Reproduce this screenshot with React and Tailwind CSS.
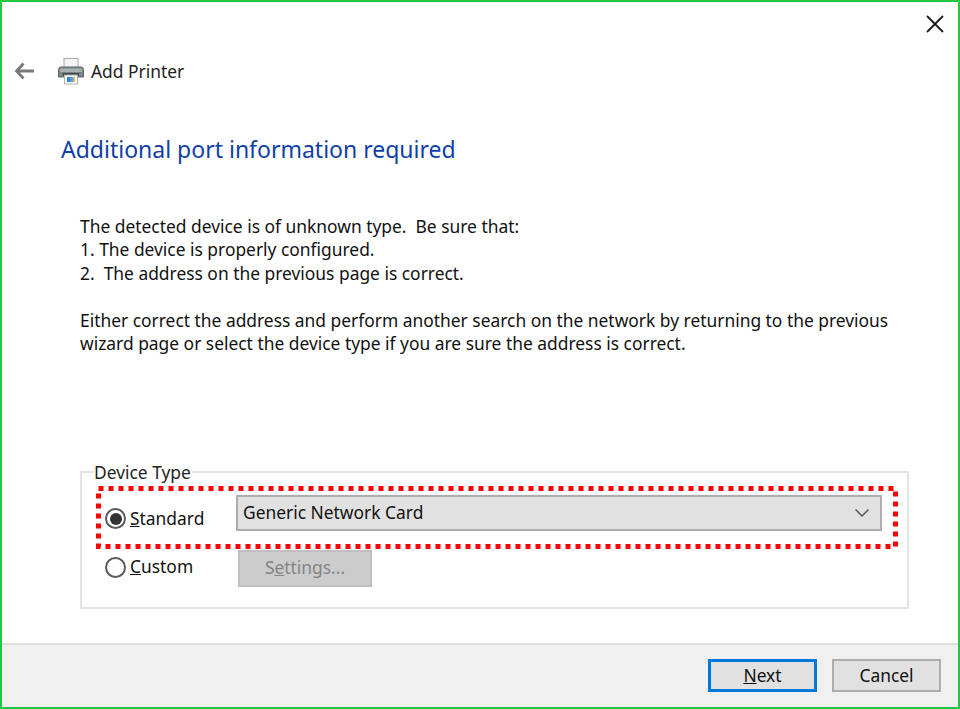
const Radio = ({ checked }) => (
  <span className="flex h-[21px] w-[21px] shrink-0 items-center justify-center rounded-full border-2 border-[#5a5a5a] bg-white">
    {checked && <span className="h-3 w-3 rounded-full bg-[#333333]" />}
  </span>
);

const PrinterIcon = () => (
  <svg width="28" height="28" viewBox="0 0 28 28" className="shrink-0">
    <rect x="7" y="1.500" width="14" height="9" fill="#f4f4f4" stroke="#a8a8a8" />
    <path d="M4 10h20a2.500 2.500 0 0 1 2.500 2.500V20H1.500v-7.500A2.500 2.500 0 0 1 4 10z" fill="#7d8488" stroke="#5f6568" />
    <rect x="3" y="11.500" width="22" height="3.500" fill="#a9afb3" />
    <rect x="6" y="16" width="16" height="3" fill="#3f4447" />
    <rect x="22.500" y="12.500" width="1.500" height="1.500" fill="#5bd04a" />
    <rect x="7.500" y="18" width="13" height="9" fill="#fafafa" stroke="#b0b0b0" />
    <rect x="10" y="20" width="3" height="5" fill="#2f86d6" />
    <rect x="13" y="20" width="3" height="5" fill="#49a5e8" />
    <rect x="16" y="20" width="2" height="5" fill="#e8b64a" />
  </svg>
);

const App = () => {
  return (
    <div
      className="box-border flex h-[709px] w-[960px] flex-col overflow-hidden border-2 border-[#22c940] bg-white text-[17.4px] leading-[23.500px] text-[#111111]"
      style={{ fontFamily: '"Noto Sans", sans-serif' }}
    >
      <div className="flex h-[43px] shrink-0 justify-end pr-[14px] pt-[13px]">
        <svg width="18" height="18" viewBox="0 0 18 18" fill="none" stroke="#1a1a1a" strokeWidth="1.800">
          <path d="M1 1l16 16M17 1L1 17" />
        </svg>
      </div>

      <div className="flex h-[52px] shrink-0 items-center pl-3">
        <svg width="20" height="18" viewBox="0 0 20 18" fill="none" stroke="#7a7a7a" strokeWidth="2.800">
          <path d="M20 9H2.500M9.500 1.500L2.500 9l7 7.500" />
        </svg>
        <div className="ml-[23px]"><PrinterIcon /></div>
        <span className="ml-[6px] pt-[2px] text-[#222222]">Add Printer</span>
      </div>

      <h1 className="ml-[59px] mt-[35px] text-[23px] leading-[34px] text-[#0f3fa8]">Additional port information required</h1>

      <div className="ml-[78px] mt-[48.500px] w-[830px]">
        <p>The detected device is of unknown type.&nbsp; Be sure that:</p>
        <p>1. The device is properly configured.</p>
        <p>2.&nbsp; The address on the previous page is correct.</p>
        <p className="mt-[23.500px]">
          Either correct the address and perform another search on the network by returning to the previous<br />
          wizard page or select the device type if you are sure the address is correct.
        </p>
      </div>

      <fieldset className="ml-[78px] mt-[106.500px] h-[147px] w-[829px] border-2 border-[#e3e3e3] pl-[14px]">
        <legend className="ml-[-2px] px-0 pr-[1px] leading-[20px] text-[#222222]">Device Type</legend>

        <div className="relative mt-[4px] h-[63px] w-[802px]">
          <svg width="802" height="63" className="absolute inset-0" fill="none">
            <rect x="2.500" y="2.500" width="797" height="58" stroke="#ff0000" strokeWidth="5" strokeDasharray="5 5" />
          </svg>
          <div className="flex h-full items-start pl-[9px] pt-[22px]">
            <Radio checked />
            <span className="ml-[4px] mt-[-1px] w-[106px]"><u>S</u>tandard</span>
            <div className="mt-[-13px] flex h-9 w-[646px] items-center justify-between border-2 border-[#adadad] bg-[#e1e1e1] pl-[5px] pr-[11px]">
              <span>Generic Network Card</span>
              <svg width="14" height="8" viewBox="0 0 14 8" fill="none" stroke="#555555" strokeWidth="1.500">
                <path d="M0.500 0.500L7 7l6.500-6.500" />
              </svg>
            </div>
          </div>
        </div>

        <div className="ml-[9px] mt-[-1px] flex h-[38px] items-center">
          <Radio />
          <span className="ml-[4px] w-[108px]"><u>C</u>ustom</span>
          <button className="mt-[2px] h-[37px] w-[134px] border-2 border-[#bfbfbf] bg-[#cccccc] text-[#838383]">
            S<u>e</u>ttings...
          </button>
        </div>
      </fieldset>

      <div className="mt-auto flex h-[64px] shrink-0 items-start justify-end gap-[15px] border-t-2 border-[#dfdfdf] bg-[#f0f0f0] pr-[17px] pt-[14px]">
        <button className="h-[33px] w-[109px] border-[3px] border-[#0078d7] bg-[#e1e1e1]"><u>N</u>ext</button>
        <button className="h-[33px] w-[109px] border-2 border-[#adadad] bg-[#e1e1e1]">Cancel</button>
      </div>
    </div>
  );
};

export default App;
